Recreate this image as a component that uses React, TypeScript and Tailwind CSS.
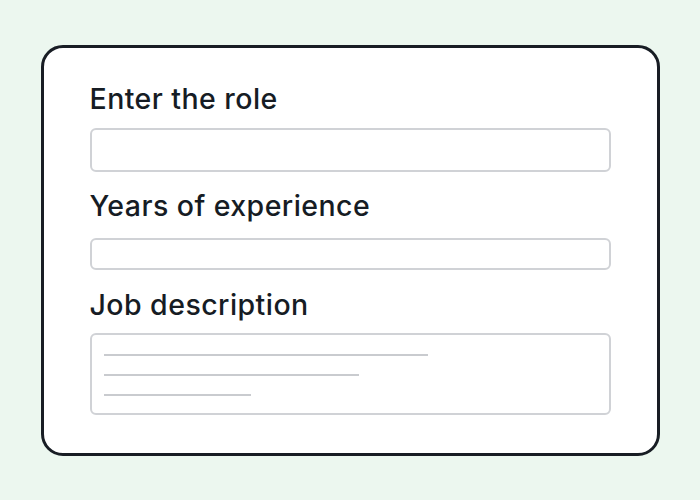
export default function App() {
  const font = { fontFamily: "Inter, 'Noto Sans', sans-serif" };
  return (
    <div className="w-[700px] h-[500px] bg-[#ecf7ef] flex items-start justify-center pt-[45px]" style={font}>
      <div className="w-[619px] h-[411px] bg-white border-[3px] border-[#181d24] rounded-[22px] pl-[46px] pr-[46px] pt-[35px] flex flex-col">
        <div className="text-[28.5px] leading-[32px] font-medium text-[#161c24] tracking-[0.45px]">Enter the role</div>
        <div className="mt-[13px] h-[44px] w-[521px] border-2 border-[#d0d2d6] rounded-[6px]" />
        <div className="mt-[18px] text-[28.5px] leading-[32px] font-medium text-[#161c24] tracking-[0.45px]">Years of experience</div>
        <div className="mt-[16px] h-[32px] w-[521px] border-2 border-[#d0d2d6] rounded-[6px]" />
        <div className="mt-[19px] text-[28.5px] leading-[32px] font-medium text-[#161c24] tracking-[0.45px]">Job description</div>
        <div className="mt-[12px] h-[82px] w-[521px] border-2 border-[#d0d2d6] rounded-[6px] pl-[12px] pt-[19px] flex flex-col gap-[18px]">
          <div className="h-[2px] w-[324px] bg-[#c9cbcf]" />
          <div className="h-[2px] w-[255px] bg-[#c9cbcf]" />
          <div className="h-[2px] w-[147px] bg-[#c9cbcf]" />
        </div>
      </div>
    </div>
  );
}
